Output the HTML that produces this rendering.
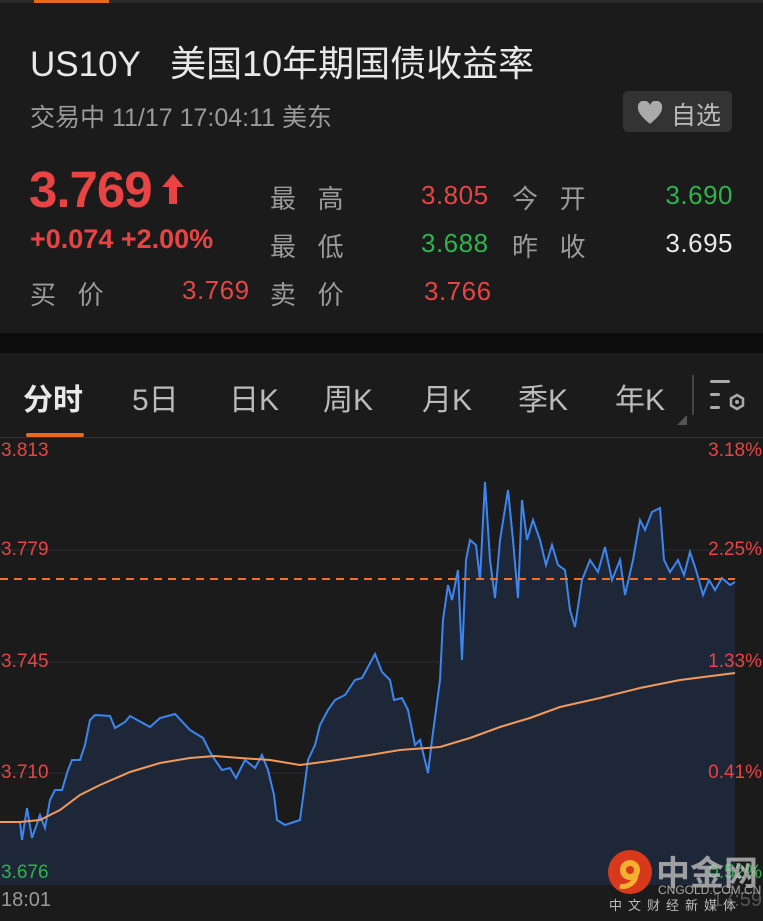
<!DOCTYPE html>
<html><head><meta charset="utf-8"><style>
body{margin:0;width:763px;height:921px;background:#1b1b1b;font-family:"Liberation Sans","Noto Sans CJK SC",sans-serif;overflow:hidden;position:relative;color:#ddd}
.a{position:absolute;white-space:nowrap}
.r{color:#e84444}.g{color:#2fb34c}.w{color:#e8e8e8}.gr{color:#9a9a9a}
.v{font-size:26px;letter-spacing:0.5px}
</style></head><body>
<div class="a" style="left:0;top:0;width:763px;height:3px;background:#2a2a2a"></div>
<div class="a" style="left:34px;top:0;width:75px;height:3px;background:#e8681e"></div>
<div class="a w" style="left:30px;top:35px;font-size:35px">US10Y&nbsp;&nbsp; <span style="font-size:36px">美国10年期国债收益率</span></div>
<div class="a gr" style="left:30px;top:98px;font-size:25px">交易中 11/17 17:04:11 美东</div>
<div class="a" style="left:623px;top:91px;width:109px;height:41px;background:#333;border-radius:5px"></div>
<svg class="a" style="left:636px;top:101px" width="28" height="24" viewBox="0 0 24 22"><path d="M12 21C5 15 1 11 1 6.5A5.5 5.5 0 0 1 12 4a5.5 5.5 0 0 1 11 2.5C23 11 19 15 12 21z" fill="#aaa"/></svg>
<div class="a gr" style="left:671px;top:96px;font-size:25px;color:#bbb">自选</div>
<div class="a r" style="left:29px;top:160px;font-size:51px;font-weight:bold;letter-spacing:-1px">3.769</div>
<svg class="a" style="left:161px;top:174px" width="24" height="30" viewBox="0 0 24 30"><path d="M12 0L23 13H16V30H8V13H1z" fill="#e84444"/></svg>
<div class="a r" style="left:30px;top:224px;font-size:27px;font-weight:bold">+0.074 +2.00%</div>
<div class="a gr" style="left:30px;top:275px;font-size:26px">买&nbsp;&nbsp; 价</div>
<div class="a r v" style="left:182px;top:275px">3.769</div>
<div class="a gr" style="left:270px;top:179px;font-size:26px">最&nbsp;&nbsp; 高</div>
<div class="a gr" style="left:270px;top:227px;font-size:26px">最&nbsp;&nbsp; 低</div>
<div class="a gr" style="left:270px;top:275px;font-size:26px">卖&nbsp;&nbsp; 价</div>
<div class="a r v" style="left:421px;top:180px">3.805</div>
<div class="a g v" style="left:421px;top:228px">3.688</div>
<div class="a r v" style="left:424px;top:276px">3.766</div>
<div class="a gr" style="left:512px;top:179px;font-size:26px">今&nbsp;&nbsp; 开</div>
<div class="a gr" style="left:512px;top:227px;font-size:26px">昨&nbsp;&nbsp; 收</div>
<div class="a g v" style="right:30px;top:180px">3.690</div>
<div class="a w v" style="right:30px;top:228px">3.695</div>
<div class="a" style="left:0;top:333px;width:763px;height:20px;background:#0c0c0c"></div>
<div class="a w" style="left:23px;top:375px;font-size:30px;font-weight:bold">分时</div>
<div class="a gr" style="left:132px;top:375px;font-size:30px;color:#bbb">5日</div>
<div class="a gr" style="left:229px;top:375px;font-size:30px;color:#bbb">日K</div>
<div class="a gr" style="left:323px;top:375px;font-size:30px;color:#bbb">周K</div>
<div class="a gr" style="left:422px;top:375px;font-size:30px;color:#bbb">月K</div>
<div class="a gr" style="left:518px;top:375px;font-size:30px;color:#bbb">季K</div>
<div class="a gr" style="left:615px;top:375px;font-size:30px;color:#bbb">年K</div>
<svg class="a" style="left:672px;top:373px" width="80" height="55"><path d="M15 42V52H5z" fill="#555"/><rect x="20" y="2" width="2" height="40" fill="#444"/><rect x="38" y="7" width="20" height="3" rx="1.5" fill="#aaa"/><rect x="38" y="20" width="10" height="3" rx="1.5" fill="#aaa"/><rect x="38" y="33" width="10" height="3" rx="1.5" fill="#aaa"/><polygon points="65,22 71,25.5 71,32.5 65,36 59,32.5 59,25.5" fill="none" stroke="#aaa" stroke-width="2.5"/><circle cx="65" cy="29" r="2" fill="#aaa"/></svg>
<div class="a" style="left:26px;top:433px;width:58px;height:4px;background:#e8681e;border-radius:2px"></div>
<div class="a" style="left:0;top:437px;width:763px;height:1px;background:#333"></div>
<svg class="a" style="left:0;top:438px" width="763" height="447">
<g stroke="#2a2e36" stroke-width="1"><line x1="0" y1="112" x2="763" y2="112"/><line x1="0" y1="224" x2="763" y2="224"/><line x1="0" y1="335" x2="763" y2="335"/></g>
<g transform="translate(0,-438)">
<polygon fill="#1d2737" points="0,822 20,822 22,840 27,808 32,838 40,815 45,828 50,800 55,790 62,790 68,770 72,760 80,760 85,745 90,720 95,715 110,716 115,728 125,722 130,716 150,727 160,718 175,714 190,730 203,738 210,752 215,760 222,770 230,768 236,778 245,760 255,768 262,755 268,770 274,795 277,820 285,825 300,820 304,790 308,760 315,745 320,725 328,710 335,700 345,695 355,680 362,678 375,654 382,672 390,680 394,700 402,698 408,710 415,745 420,740 428,773 432,740 440,680 443,620 448,585 452,600 458,570 462,660 466,560 470,540 476,545 480,580 485,482 490,560 495,598 500,540 508,490 513,540 518,598 522,500 527,540 533,520 540,540 546,565 552,545 558,565 565,570 570,610 575,627 582,580 590,560 598,572 605,547 612,580 620,560 625,595 633,560 640,520 645,530 652,512 660,508 664,560 670,572 678,560 684,575 690,552 696,570 703,595 709,580 715,590 722,578 730,585 735,582 735,885 0,885"/>
<polyline fill="none" stroke="#3d86f0" stroke-width="2" points="20,822 22,840 27,808 32,838 40,815 45,828 50,800 55,790 62,790 68,770 72,760 80,760 85,745 90,720 95,715 110,716 115,728 125,722 130,716 150,727 160,718 175,714 190,730 203,738 210,752 215,760 222,770 230,768 236,778 245,760 255,768 262,755 268,770 274,795 277,820 285,825 300,820 304,790 308,760 315,745 320,725 328,710 335,700 345,695 355,680 362,678 375,654 382,672 390,680 394,700 402,698 408,710 415,745 420,740 428,773 432,740 440,680 443,620 448,585 452,600 458,570 462,660 466,560 470,540 476,545 480,580 485,482 490,560 495,598 500,540 508,490 513,540 518,598 522,500 527,540 533,520 540,540 546,565 552,545 558,565 565,570 570,610 575,627 582,580 590,560 598,572 605,547 612,580 620,560 625,595 633,560 640,520 645,530 652,512 660,508 664,560 670,572 678,560 684,575 690,552 696,570 703,595 709,580 715,590 722,578 730,585 735,582"/>
<polyline fill="none" stroke="#f29a5c" stroke-width="2" points="0,822 20,822 40,820 60,810 80,795 100,785 130,772 160,763 190,758 215,756 240,758 270,760 300,765 330,761 370,755 400,750 440,747 470,738 500,727 530,718 560,707 600,698 640,688 680,680 735,673"/>
<line x1="0" y1="579" x2="735" y2="579" stroke="#f0722a" stroke-width="2" stroke-dasharray="8,6"/>
</g></svg>
<div class="a r" style="left:1px;top:440px;font-size:19px">3.813</div>
<div class="a r" style="left:1px;top:539px;font-size:19px">3.779</div>
<div class="a r" style="left:1px;top:651px;font-size:19px">3.745</div>
<div class="a r" style="left:1px;top:762px;font-size:19px">3.710</div>
<div class="a g" style="left:1px;top:862px;font-size:19px">3.676</div>
<div class="a r" style="right:1px;top:440px;font-size:19px">3.18%</div>
<div class="a r" style="right:1px;top:539px;font-size:19px">2.25%</div>
<div class="a r" style="right:1px;top:651px;font-size:19px">1.33%</div>
<div class="a r" style="right:1px;top:762px;font-size:19px">0.41%</div>
<div class="a g" style="right:1px;top:862px;font-size:19px">0.52%</div>
<div class="a gr" style="left:1px;top:889px;font-size:20px">18:01</div>
<div class="a" style="left:712px;top:889px;font-size:20px;color:#555">17:59</div>
<svg class="a" style="left:606px;top:848px" width="48" height="48"><circle cx="24" cy="24" r="22" fill="#d8391c"/><circle cx="24" cy="22" r="10" fill="#f5b030"/><path d="M30 28C28 36 20 40 14 38" stroke="#f5b030" stroke-width="5" fill="none"/><circle cx="24" cy="22" r="4" fill="#d8391c"/></svg>
<div class="a" style="left:656px;top:846px;font-size:34px;font-weight:bold;color:rgba(200,200,200,.75)">中金网</div>
<div class="a" style="left:658px;top:883px;font-size:12px;color:#aaa">CNGOLD.COM.CN</div>
<div class="a" style="left:609px;top:895px;font-size:13px;letter-spacing:6px;color:#bbb">中文财经新媒体</div>
</body></html>
